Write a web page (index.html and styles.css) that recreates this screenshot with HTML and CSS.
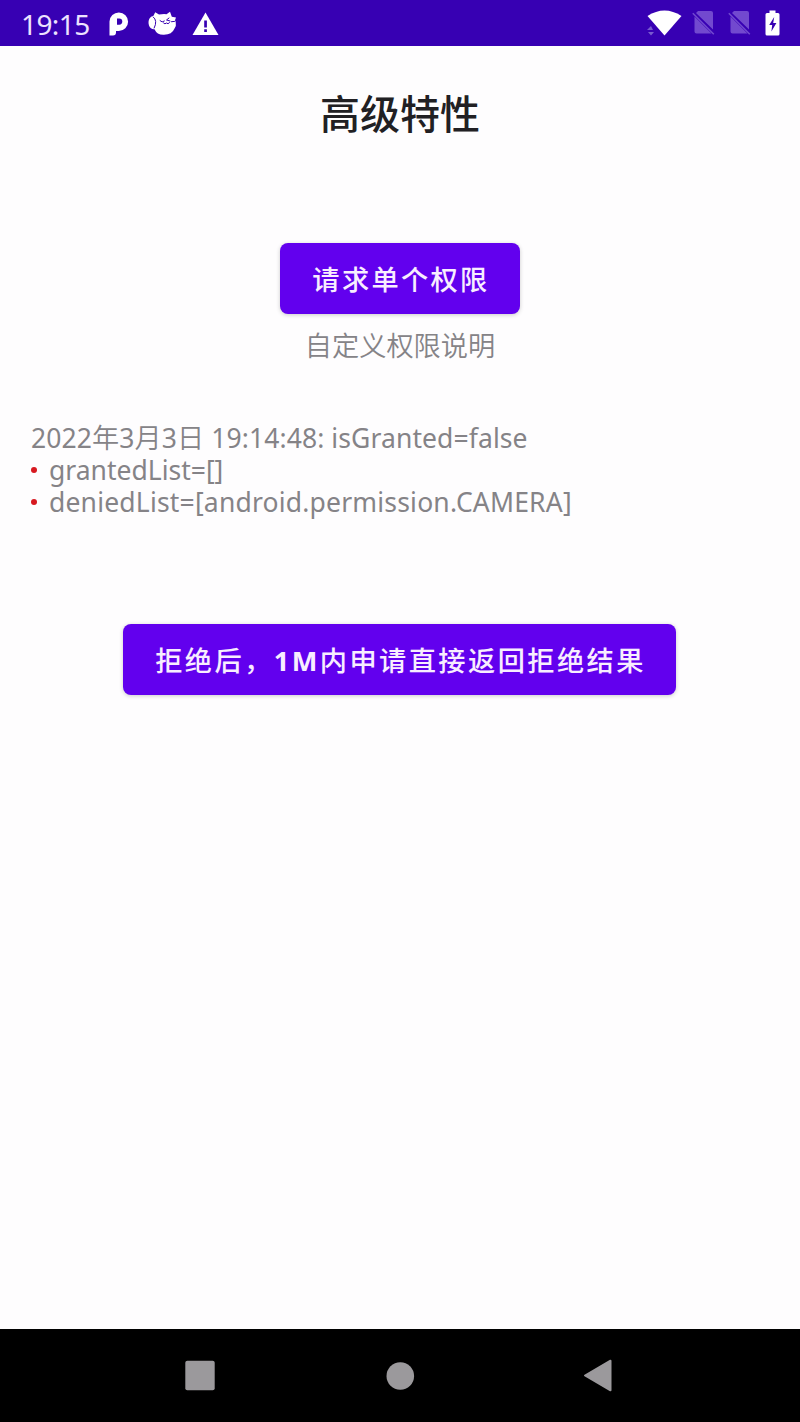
FILE: index.html
```html
<!DOCTYPE html>
<html lang="zh-CN">
<head>
<meta charset="utf-8">
<title>高级特性</title>
<link rel="stylesheet" href="styles.css">
</head>
<body>
<div class="screen">
  <header class="status">
    <div class="status-left">
      <span class="clock">19:15</span>
      <svg class="icon-p" width="20" height="24" viewBox="0 0 20 24"><path fill="#fff" fill-rule="evenodd" d="M.5 23.5V9.5A9.3 9.3 0 1 1 9.8 19H7v1.500a3 3 0 0 1-3 3zM8 6.500v6.200h2.200a3.100 3.100 0 0 0 0-6.200z"/></svg>
      <svg class="icon-cat" width="29" height="25" viewBox="0 0 29 25"><path fill="#fff" d="M5.500 4.800 7.200 1.300 11 3.600q4-.8 7.500-.4L22 .8l1.800 5L28 6.500l-1 2.800q1 1.500.8 3.500.700 3-1.300 4.700Q24 23.700 16 23.800q-7 .3-9.500-5.500-3.800.4-5.500-3.800C-.5 9 2 5.500 5.500 4.800z"/><g fill="none" stroke="#3700b3" stroke-width="1" stroke-linecap="round"><path d="M5.300 6Q9.800 9.500 6.200 17M12 9.700q2 2.500 4.400.4M21 7l-2.500 2 3.500 1M15.500 12q1.500 1.800 3 0 1.500 1.800 3-.3M23.500 10.700l3-.3"/></g></svg>
      <svg class="icon-warn" width="27" height="24" viewBox="0 0 27 24"><path fill="#fff" d="M13.500.5 26.500 23H.5z"/><path fill="#3700b3" d="M12.200 8.500h2.700v7h-2.700zM12.200 17.200h2.700v2.700h-2.700z"/></svg>
    </div>
    <div class="status-right">
      <svg class="wifi" width="36" height="28" viewBox="0 0 36 28"><path fill="#fff" d="M.5 6Q17.500-5 34.500 6L17.500 25.500z"/><path fill="#795bcf" d="m0 20 4-4 2 4zM1 22h6l-3 3.500z"/></svg>
      <svg class="sim" width="24" height="25" viewBox="0 0 24 25"><path fill="#7249cf" d="M6 1h13a2 2 0 0 1 2 2v16.500L4 3zM2.500 6.500 19.500 23.500h-15a2 2 0 0 1-2-2z"/><path stroke="#7249cf" stroke-width="1.500" d="m.8 3.200 21 21"/></svg>
      <svg class="sim" width="24" height="25" viewBox="0 0 24 25"><path fill="#7249cf" d="M6 1h13a2 2 0 0 1 2 2v16.500L4 3zM2.500 6.500 19.500 23.500h-15a2 2 0 0 1-2-2z"/><path stroke="#7249cf" stroke-width="1.500" d="m.8 3.200 21 21"/></svg>
      <svg class="battery" width="15" height="26" viewBox="0 0 15 26"><path fill="#fff" d="M4.500.5h6V3H13a1.500 1.500 0 0 1 1.500 1.500V24a1.500 1.500 0 0 1-1.500 1.500H2A1.500 1.500 0 0 1 .5 24V4.500A1.500 1.500 0 0 1 2 3h2.500z"/><path fill="#3700b3" d="m9.200 7-5 8h3l-.8 6.500 5-8.500H8.200z"/></svg>
    </div>
  </header>
  <main class="content">
    <h1 class="title">高级特性</h1>
    <button class="button button-single">请求单个权限</button>
    <p class="caption">自定义权限说明</p>
    <section class="log">
      <p class="log-line line-time">2022<span class="cjk">年</span>3<span class="cjk">月</span>3<span class="cjk">日</span> 19:14:48: isGranted=false</p>
      <p class="log-line item line-granted">grantedList=[]</p>
      <p class="log-line item line-denied">deniedList=[android.permission.CAMERA]</p>
    </section>
    <button class="button button-deny">拒绝后，<b class="latin">1M</b>内申请直接返回拒绝结果</button>
  </main>
  <nav class="navbar">
    <svg width="30" height="30" viewBox="0 0 30 30"><rect x=".3" y="-.2" width="29.400" height="29.400" rx="2" fill="#9b999c"/></svg>
    <svg width="30" height="30" viewBox="0 0 30 30"><circle cx="16.300" cy="15" r="13.800" fill="#9b999c"/></svg>
    <svg width="30" height="34" viewBox="0 0 30 34"><path d="M2 16.500 27.500 1.700v29.600z" fill="#9b999c" stroke="#9b999c" stroke-width="2" stroke-linejoin="round"/></svg>
  </nav>
</div>
</body>
</html>
```
FILE: styles.css
```css
* { box-sizing: border-box; }
body { margin: 0; font-family: "Noto Sans", "Noto Sans CJK SC", sans-serif; }
p, h1 { margin: 0; }
svg { display: block; flex: none; overflow: visible; }
.screen { width: 800px; height: 1422px; display: flex; flex-direction: column; background: #fefdfe; }
.status { height: 46px; flex: none; background: #3700b3; display: flex; justify-content: space-between; }
.status-left { display: flex; padding-left: 21px; }
.clock { width: 88px; color: #ece2ff; font-size: 28px; line-height: 48px; letter-spacing: -.6px; font-weight: 400; }
.icon-p { margin-top: 12px; }
.icon-cat { margin: 11px 0 0 19px; }
.icon-warn { margin: 12px 0 0 15px; }
.status-right { display: flex; padding-right: 20px; }
.status-right svg { margin-top: 10px; }
.status-right .wifi { margin-right: -3px; }
.status-right .sim { margin-left: 12px; }
.status-right .battery { margin-left: 13px; }
.content { flex: 1; display: flex; flex-direction: column; align-items: center; }
.title { margin-top: 36px; height: 60px; line-height: 60px; font-size: 40px; font-weight: 500; color: #212023; font-family: "Noto Sans CJK SC", sans-serif; }
.button { display: block; height: 71px; border: 0; border-radius: 8px; background: #6200ee; color: #f8edff; font: 500 27.200px/71px "Noto Sans CJK SC", sans-serif; letter-spacing: 2.360px; padding: 0 0 0 2px; white-space: nowrap; box-shadow: 0 1px 4px rgba(0, 0, 0, .2); }
.button-single { width: 240px; margin-top: 101px; }
.button-deny { width: 553px; margin: 106px 1px 0 0; letter-spacing: 2.450px; }
.latin { font-family: "Noto Sans", sans-serif; font-weight: 700; }
.caption { margin-top: 10px; height: 40px; line-height: 40px; font-size: 27.200px; font-weight: 350; color: #858387; font-family: "Noto Sans CJK SC", sans-serif; }
.log { width: 100%; padding-left: 31px; margin-top: 58px; color: #858387; }
.log-line { height: 32px; line-height: 32px; font-size: 26.500px; font-weight: 400; white-space: nowrap; }
.line-time { letter-spacing: .090px; }
.line-denied { letter-spacing: .190px; }
.cjk { font-family: "Noto Sans CJK SC", sans-serif; font-weight: 350; font-size: 27.200px; line-height: 1; }
.item { display: flex; align-items: center; }
.item::before { content: ""; width: 6px; height: 6px; border-radius: 50%; background: #d71920; margin-right: 12px; }
.navbar { height: 93px; flex: none; background: #000; display: flex; justify-content: space-between; align-items: center; padding: 0 187px 0 185px; }
```
